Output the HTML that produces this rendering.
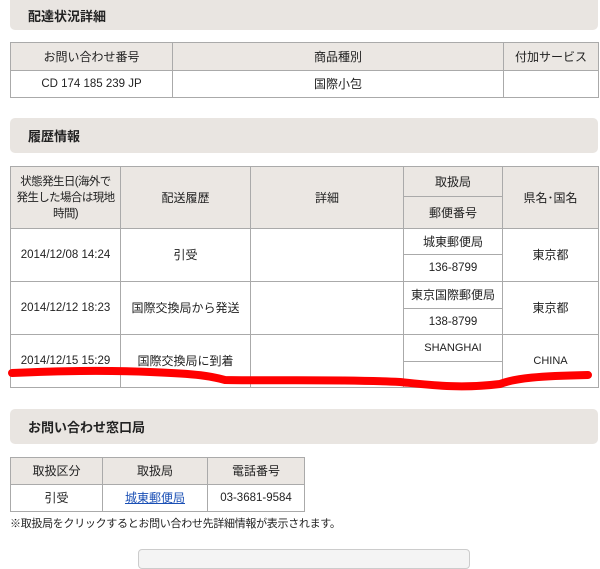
<!DOCTYPE html>
<html><head><meta charset="utf-8"><style>
*{margin:0;padding:0;box-sizing:border-box}
body{width:600px;height:553px;overflow:hidden;background:#fff;font-family:"Liberation Sans","Noto Sans CJK JP",sans-serif;font-size:12px;color:#222;position:relative}
.h{position:absolute;left:10px;width:588px;background:#e9e5e1;border-radius:5px;font-weight:bold;font-size:13px;padding-left:18px;display:flex;align-items:center}
table{position:absolute;border-collapse:collapse;table-layout:fixed}
td{border:1px solid #aaa;text-align:center;vertical-align:middle;padding:0;line-height:16px}
.th{background:#ebe7e3}
.d{font-size:11.5px}
a{color:#1a4fb5;text-decoration:underline}
</style></head><body>
<div class="h" style="top:-6px;height:36px;padding-top:6px">配達状況詳細</div>
<table style="left:10px;top:42px;width:588px">
<col style="width:162px"><col style="width:331px"><col style="width:95px">
<tr style="height:28px"><td class="th">お問い合わせ番号</td><td class="th">商品種別</td><td class="th">付加サービス</td></tr>
<tr style="height:27px"><td class="d">CD 174 185 239 JP</td><td>国際小包</td><td></td></tr>
</table>
<div class="h" style="top:118px;height:35px">履歴情報</div>
<table style="left:10px;top:166px;width:588px">
<col style="width:110px"><col style="width:130px"><col style="width:153px"><col style="width:99px"><col style="width:96px">
<tr style="height:30px"><td class="th" rowspan="2" style="font-size:11.5px;letter-spacing:-0.6px">状態発生日(海外で<br>発生した場合は現地<br>時間)</td><td class="th" rowspan="2">配送履歴</td><td class="th" rowspan="2">詳細</td><td class="th">取扱局</td><td class="th" rowspan="2">県名･国名</td></tr>
<tr style="height:32px"><td class="th">郵便番号</td></tr>
<tr style="height:26px"><td rowspan="2" class="d">2014/12/08 14:24</td><td rowspan="2">引受</td><td rowspan="2"></td><td>城東郵便局</td><td rowspan="2">東京都</td></tr>
<tr style="height:27px"><td class="d">136-8799</td></tr>
<tr style="height:27px"><td rowspan="2" class="d">2014/12/12 18:23</td><td rowspan="2">国際交換局から発送</td><td rowspan="2"></td><td>東京国際郵便局</td><td rowspan="2">東京都</td></tr>
<tr style="height:26px"><td class="d">138-8799</td></tr>
<tr style="height:27px"><td rowspan="2" class="d">2014/12/15 15:29</td><td rowspan="2">国際交換局に到着</td><td rowspan="2"></td><td style="font-size:11px">SHANGHAI</td><td rowspan="2" style="font-size:11px">CHINA</td></tr>
<tr style="height:26px"><td></td></tr>
</table>
<svg style="position:absolute;left:0;top:0" width="600" height="553"><path d="M12 373 C60 371 100 370 150 372 S210 376 225 380 C270 381 340 379 400 382 C430 385 460 389 500 384 C515 378 540 376 588 375" stroke="#f00" stroke-width="8" fill="none" stroke-linecap="round"/></svg>
<div class="h" style="top:409px;height:35px">お問い合わせ窓口局</div>
<table style="left:10px;top:457px;width:294px">
<col style="width:92px"><col style="width:105px"><col style="width:97px">
<tr style="height:27px"><td class="th">取扱区分</td><td class="th">取扱局</td><td class="th">電話番号</td></tr>
<tr style="height:27px"><td>引受</td><td><a>城東郵便局</a></td><td class="d">03-3681-9584</td></tr>
</table>
<div style="position:absolute;left:10px;top:515px;font-size:11px;letter-spacing:-0.3px">※取扱局をクリックするとお問い合わせ先詳細情報が表示されます。</div>
<div style="position:absolute;left:138px;top:549px;width:332px;height:20px;border:1px solid #ccc;border-radius:4px;background:#f4f4f4"></div>
</body></html>
